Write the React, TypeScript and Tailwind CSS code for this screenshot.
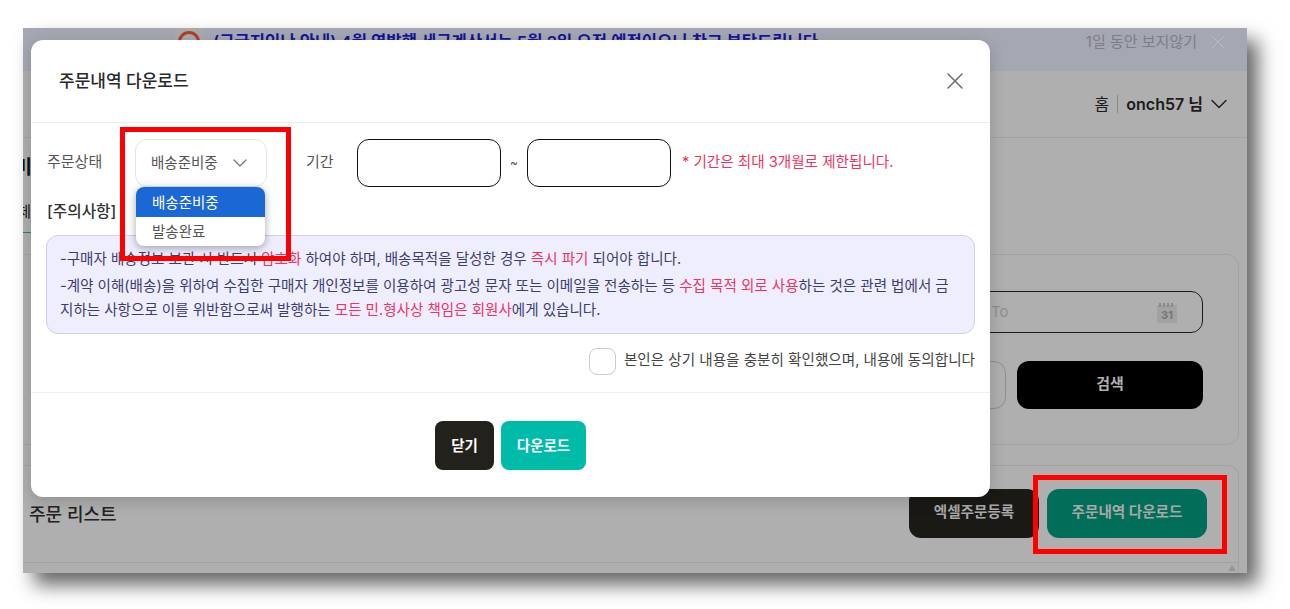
import { ChevronDown, X } from "lucide-react"

const fontStack = "font-['Inter','Noto_Sans_CJK_KR',sans-serif]"

const Notice = () => {
    return (
        <div className="rounded-xl border border-[#cfcff5] bg-[#eeeeff] pt-[11px] pb-[11px] pl-[13px] pr-[16px] text-[14.56px] leading-[24px] text-[#3d3d6e]">
            <p>
                -구매자 배송정보 보관 시 반드시 <span className="text-[#f0345f]">암호화</span> 하여야 하며, 배송목적을 달성한 경우{" "}
                <span className="text-[#f0345f]">즉시 파기</span> 되어야 합니다.
            </p>
            <p className="mt-[3px]">
                -계약 이해(배송)을 위하여 수집한 구매자 개인정보를 이용하여 광고성 문자 또는 이메일을 전송하는 등{" "}
                <span className="text-[#f0345f]">수집 목적 외로 사용</span>하는 것은 관련 법에서 금지하는 사항으로 이를 위반함으로써 발행하는{" "}
                <span className="text-[#f0345f]">모든 민.형사상 책임은 회원사</span>에게 있습니다.
            </p>
        </div>
    )
}

const DownloadModal = () => {
    return (
        <div className="absolute left-[8px] top-[12px] flex h-[457px] w-[959px] flex-col rounded-xl bg-white shadow-[0_4px_16px_rgba(0,0,0,0.18)]">
            <div className="flex h-[83px] shrink-0 items-center justify-between border-b border-[#ececec] pl-[28px] pr-[21px]">
                <div className="pt-[2px] text-[17px] font-medium text-[#2a2a2a]">주문내역 다운로드</div>
                <X className="h-[28px] w-[28px] text-[#707070]" strokeWidth={1.3} />
            </div>
            <div className="flex flex-col px-[15px]">
                <div className="mt-[16px] flex h-[48px] items-center text-[15px] text-[#555555]">
                    <div className="w-[89px] pb-[1px] pl-[1px]">주문상태</div>
                    <div className="relative flex h-[48px] w-[132px] items-center justify-between rounded-xl border border-[#e4e4e4] pl-[15px] pr-[14px] text-[14.5px]">
                        <span className="pb-[1px]">배송준비중</span>
                        <ChevronDown className="h-[24px] w-[24px] text-[#777777]" strokeWidth={1.3} />
                        <div className="absolute left-0 top-[47px] z-10 w-[129px] overflow-hidden rounded-lg bg-white text-[14.5px] shadow-[0_2px_8px_rgba(0,0,0,0.35)]">
                            <div className="flex h-[30px] items-center bg-[#1a68d6] pl-[16px] pt-[1px] text-white">배송준비중</div>
                            <div className="flex h-[29px] items-center pl-[16px] text-[#555555]">발송완료</div>
                        </div>
                    </div>
                    <div className="ml-[39px] w-[51px] pb-[2px]">기간</div>
                    <div className="h-[48px] w-[144px] rounded-xl border border-[#111111]" />
                    <div className="w-[26px] text-center text-[12px]">~</div>
                    <div className="h-[48px] w-[144px] rounded-xl border border-[#111111]" />
                    <div className="ml-[11px] pb-[1px] text-[14.6px] text-[#f0345f]">* 기간은 최대 3개월로 제한됩니다.</div>
                </div>
                <div className="mt-[14px] flex h-[21px] items-center pl-[1px] text-[15.7px] font-medium text-[#333333]">[주의사항]</div>
                <div className="mt-[13px]">
                    <Notice />
                </div>
                <div className="mt-[14px] flex items-center justify-end gap-[8px] text-[14.6px] text-[#444444]">
                    <div className="h-[27px] w-[27px] rounded-lg border border-[#cccccc]" />
                    <span className="pb-[1px]">본인은 상기 내용을 충분히 확인했으며, 내용에 동의합니다</span>
                </div>
            </div>
            <div className="mt-[17px] flex justify-center gap-[7px] border-t border-[#efefef] pt-[28px] text-[14.5px] font-bold text-white">
                <div className="flex h-[49px] w-[59px] items-center justify-center rounded-lg bg-[#23211c]">닫기</div>
                <div className="flex h-[49px] w-[85px] items-center justify-center rounded-lg bg-[#00bba7]">다운로드</div>
            </div>
        </div>
    )
}

const BackgroundPage = () => {
    return (
        <div className="flex h-full flex-col">
            <div className="flex h-[43px] shrink-0 items-center bg-[#a5a7b2] pl-[151px] pr-[17px]">
                <div className="flex w-[29px] items-start justify-center self-stretch bg-[#aaaaaa] pt-[3px]">
                    <div className="flex h-[22px] w-[22px] items-center justify-center rounded-full border-[3px] border-[#b5392c] text-[10px] font-bold text-[#b5392c]">m</div>
                </div>
                <div className="mb-[15px] ml-[10px] whitespace-nowrap text-[16.6px] font-semibold text-[#14149e]">
                    (구글지인난 안내) 4월 역발행 세금계산서는 5월 2일 오전 예정이오니 참고 부탁드립니다
                </div>
                <div className="mb-[15px] ml-auto text-[15px] text-[#7c7e88]">1일 동안 보지않기</div>
                <X className="mb-[15px] ml-[9px] h-[24px] w-[24px] text-[#b9bac2]" strokeWidth={1} />
            </div>
            <div className="flex h-[67px] shrink-0 items-center justify-end border-b border-[#a3a3a3] pr-[14px] text-[16px] text-[#1c1c1c]">
                <span>홈</span>
                <div className="mx-[8px] h-[18px] w-px bg-[#8a8a8a]" />
                <span className="font-semibold">onch57 님</span>
                <ChevronDown className="ml-[2px] h-[28px] w-[28px]" strokeWidth={1.2} />
            </div>
            <div className="flex h-[60px] shrink-0 items-center">
                <div className="flex w-[9px] justify-end overflow-hidden whitespace-nowrap text-[19px] font-bold text-[#111111]">미</div>
            </div>
            <div className="flex h-[35px] w-[30px] shrink-0 items-center border-b border-[#37796a] pb-[6px]">
                <div className="flex w-[8px] justify-end overflow-hidden whitespace-nowrap text-[15px] text-[#111111]">전체</div>
            </div>
            <div className="-ml-[16px] mr-[8px] mt-[21px] flex h-[191px] shrink-0 flex-col items-end rounded-xl border border-[#a3a3a3] pr-[35px] pt-[36px]">
                <div className="flex h-[42px] w-[260px] items-center justify-between rounded-xl border border-[#1c1c1c] pl-[47px] pr-[25px] text-[15px] text-[#8f8f8f]">
                    <span className="pt-[1px] font-['Inter',sans-serif]">To</span>
                    <svg width="20" height="21" viewBox="0 0 20 21">
                        <rect x="0" y="3" width="20" height="18" fill="#a2a2a2" />
                        <path d="M3 1v4M7 1v4M11 1v4M15 1v4" stroke="#808080" strokeWidth="1.5" />
                        <text x="10" y="17" textAnchor="middle" fontSize="11" fontWeight="700" fill="#757575" fontFamily="Inter, sans-serif">31</text>
                    </svg>
                </div>
                <div className="mt-[28px] flex gap-[11px]">
                    <div className="h-[48px] w-[200px] rounded-xl border border-[#8e8e8e]" />
                    <div className="flex h-[48px] w-[186px] items-center justify-center rounded-xl bg-black pb-[1px] text-[15px] font-bold text-[#b0b0b0]">검색</div>
                </div>
            </div>
            <div className="-ml-[16px] mr-[8px] mt-[20px] flex min-h-0 flex-1 flex-col rounded-t-xl border-x border-t border-[#a3a3a3]">
                <div className="flex h-[97px] shrink-0 items-center justify-between border-b border-[#a3a3a3] pb-[2px] pl-[21px] pr-[31px]">
                    <div className="pt-[2px] text-[18px] font-medium text-[#222222]">주문 리스트</div>
                    <div className="flex gap-[8px] text-[14.6px] font-bold">
                        <div className="flex h-[49px] w-[130px] items-center justify-center rounded-xl bg-[#1a1916] text-[#a8a8a8]">엑셀주문등록</div>
                        <div className="flex h-[49px] w-[160px] items-center justify-center rounded-xl bg-[#006e59] text-[#a8a8a8]">주문내역 다운로드</div>
                    </div>
                </div>
                <div className="flex justify-end pr-[2px] pt-[2px]">
                    <div className="h-0 w-0 border-x-[4px] border-b-[6px] border-x-transparent border-b-[#969696]" />
                </div>
            </div>
        </div>
    )
}

export default function App() {
    return (
        <div className={`relative h-screen w-full overflow-hidden bg-white ${fontStack}`}>
            <div className="ml-[23px] mt-[28px] h-[545px] w-[1224px] bg-[#afafaf] shadow-[11px_12px_18px_rgba(0,0,0,0.6)]">
                <div className="relative h-full w-full overflow-hidden">
                    <BackgroundPage />
                    <DownloadModal />
                </div>
            </div>
            <div className="absolute left-[120px] top-[127px] h-[134px] w-[171px] border-[5px] border-[#ff0000]" />
            <div className="absolute left-[1033px] top-[475px] h-[79px] w-[194px] border-[5px] border-[#ff0000]" />
        </div>
    )
}
